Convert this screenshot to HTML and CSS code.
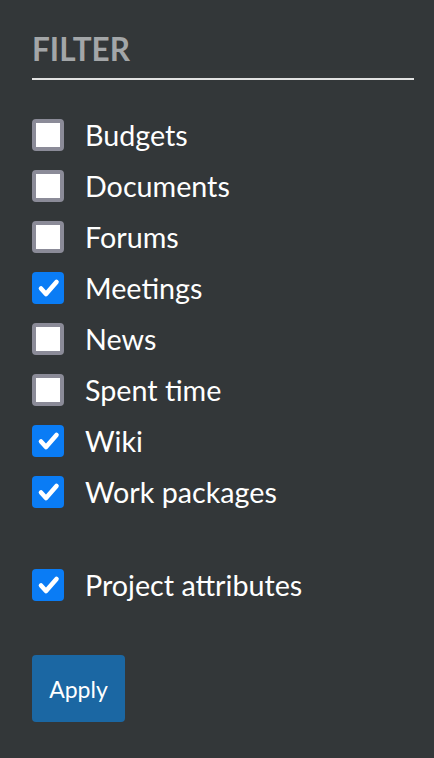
FILE: index.html
```html
<!DOCTYPE html>
<html>
<head>
<meta charset="utf-8">
<link rel="stylesheet" href="styles.css">
</head>
<body>
<div class="panel">
  <h2 class="title">FILTER</h2>
  <ul class="list">
    <li class="item"><span class="box"></span><span class="label">Budgets</span></li>
    <li class="item"><span class="box"></span><span class="label">Documents</span></li>
    <li class="item"><span class="box"></span><span class="label">Forums</span></li>
    <li class="item"><span class="box checked"><svg viewBox="0 0 32 32"><path d="M9 16.5 L14 22 L24.5 10" fill="none" stroke="#fff" stroke-width="4.6" stroke-linecap="round" stroke-linejoin="round"/></svg></span><span class="label">Meetings</span></li>
    <li class="item"><span class="box"></span><span class="label">News</span></li>
    <li class="item"><span class="box"></span><span class="label">Spent time</span></li>
    <li class="item"><span class="box checked"><svg viewBox="0 0 32 32"><path d="M9 16.5 L14 22 L24.5 10" fill="none" stroke="#fff" stroke-width="4.6" stroke-linecap="round" stroke-linejoin="round"/></svg></span><span class="label">Wiki</span></li>
    <li class="item"><span class="box checked"><svg viewBox="0 0 32 32"><path d="M9 16.5 L14 22 L24.5 10" fill="none" stroke="#fff" stroke-width="4.6" stroke-linecap="round" stroke-linejoin="round"/></svg></span><span class="label">Work packages</span></li>
  </ul>
  <div class="item extra"><span class="box checked"><svg viewBox="0 0 32 32"><path d="M9 16.5 L14 22 L24.5 10" fill="none" stroke="#fff" stroke-width="4.6" stroke-linecap="round" stroke-linejoin="round"/></svg></span><span class="label">Project attributes</span></div>
  <button class="apply">Apply</button>
</div>
</body>
</html>
```
FILE: styles.css
```css
html, body {
  margin: 0;
  padding: 0;
  background: #333739;
}
.panel {
  box-sizing: border-box;
  width: 434px;
  height: 758px;
  padding: 30px 20px 0 32px;
  font-family: Lato, "Open Sans", sans-serif;
  color: #fff;
}
.title {
  margin: 0;
  font-size: 31.5px;
  font-weight: 700;
  color: #a3a6a8;
  line-height: 38px;
  padding-bottom: 10px;
  border-bottom: 2px solid #e2e2e2;
}
.list {
  list-style: none;
  margin: 0;
  padding: 0;
  margin-top: 29px;
}
.item {
  display: flex;
  align-items: center;
  height: 51px;
}
.box {
  box-sizing: border-box;
  width: 32px;
  height: 32px;
  border: 4px solid #8b8b98;
  border-radius: 4px;
  background: #fff;
  flex: none;
  display: flex;
}
.box.checked {
  border: none;
  background: #0a7cf5;
}
.box svg {
  width: 32px;
  height: 32px;
}
.label {
  margin-left: 21px;
  font-size: 28.7px;
  line-height: 32px;
}
.extra {
  margin-top: 42px;
}
.apply {
  margin-top: 45px;
  width: 93px;
  height: 67px;
  border: none;
  border-radius: 4px;
  background: #1b67a3;
  color: #fff;
  font-family: Lato, sans-serif;
  font-size: 23px;
  padding: 0;
}
```
